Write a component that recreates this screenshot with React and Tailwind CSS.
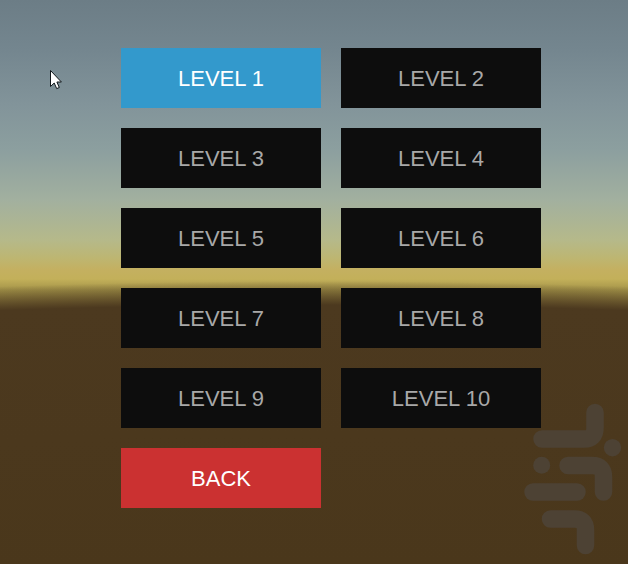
import { useState } from 'react'

const LEVELS = Array.from({ length: 10 }, (_, index) => index + 1)

function MenuButton({ className, children, ...props }) {
  return (
    <button type="button" className={`h-15 pt-0.5 text-[22px] leading-6 ${className}`} {...props}>
      {children}
    </button>
  )
}

function Pointer() {
  return (
    <svg className="pointer-events-none absolute left-[50px] top-[69px]" width="13" height="21" viewBox="0 0 13 21" aria-hidden="true">
      <path
        d="M.5 1.5v16l3.7-3.5 2.5 5.6 2.6-1.1-2.4-5.5h4.5z"
        fill="#fff"
        stroke="#10161a"
        strokeWidth="1"
        strokeLinejoin="round"
      />
    </svg>
  )
}

function Watermark() {
  return (
    <svg className="pointer-events-none absolute bottom-0 right-0" width="120" height="174" viewBox="0 0 120 174" aria-hidden="true">
      <g fill="none" stroke="#4d4234" strokeWidth="17.5" strokeLinecap="round">
        <path d="M87 22.5V38q0 11-11 11H34" />
        <path d="M60 75.5h24q11.5 0 11.5 11.5v15" />
        <path d="M25 102h44" />
        <path d="M42.5 129h24q11 0 11 11v15.5" />
      </g>
      <circle cx="104.5" cy="57.7" r="8.7" fill="#4d4234" />
      <circle cx="33.7" cy="75.2" r="8.5" fill="#4d4234" />
    </svg>
  )
}

export default function App() {
  const [unlocked] = useState(1)
  const [selected, setSelected] = useState(1)

  return (
    <main className="relative min-h-screen overflow-hidden bg-[radial-gradient(circle_at_50%_9305px,#4a371b_8740px,#4c391f_9000px,transparent_9024px),linear-gradient(#6c7d86_0px,#74868f_50px,#82949a_105px,#8c9f9f_150px,#a2b09f_200px,#b5b98a_240px,#bdb673_257px,#c4b060_270px,#c3b05a_279px,#a49449_290px,#917f3f_309px)] pt-12 pb-14 pl-[34px] font-['Liberation_Sans',Arial,sans-serif]">
      <nav aria-label="Level select" className="mx-auto grid w-full max-w-[420px] grid-cols-2 gap-5">
        {LEVELS.map((level) => (
          <MenuButton
            key={level}
            disabled={level > unlocked}
            onClick={() => setSelected(level)}
            className={level === selected ? 'bg-[#3399cc] text-white' : 'bg-[#0d0d0d] text-[#a8a8a8]'}
          >
            LEVEL {level}
          </MenuButton>
        ))}
        <MenuButton className="bg-[#cb3131] text-white">BACK</MenuButton>
      </nav>
      <Watermark />
      <Pointer />
    </main>
  )
}
